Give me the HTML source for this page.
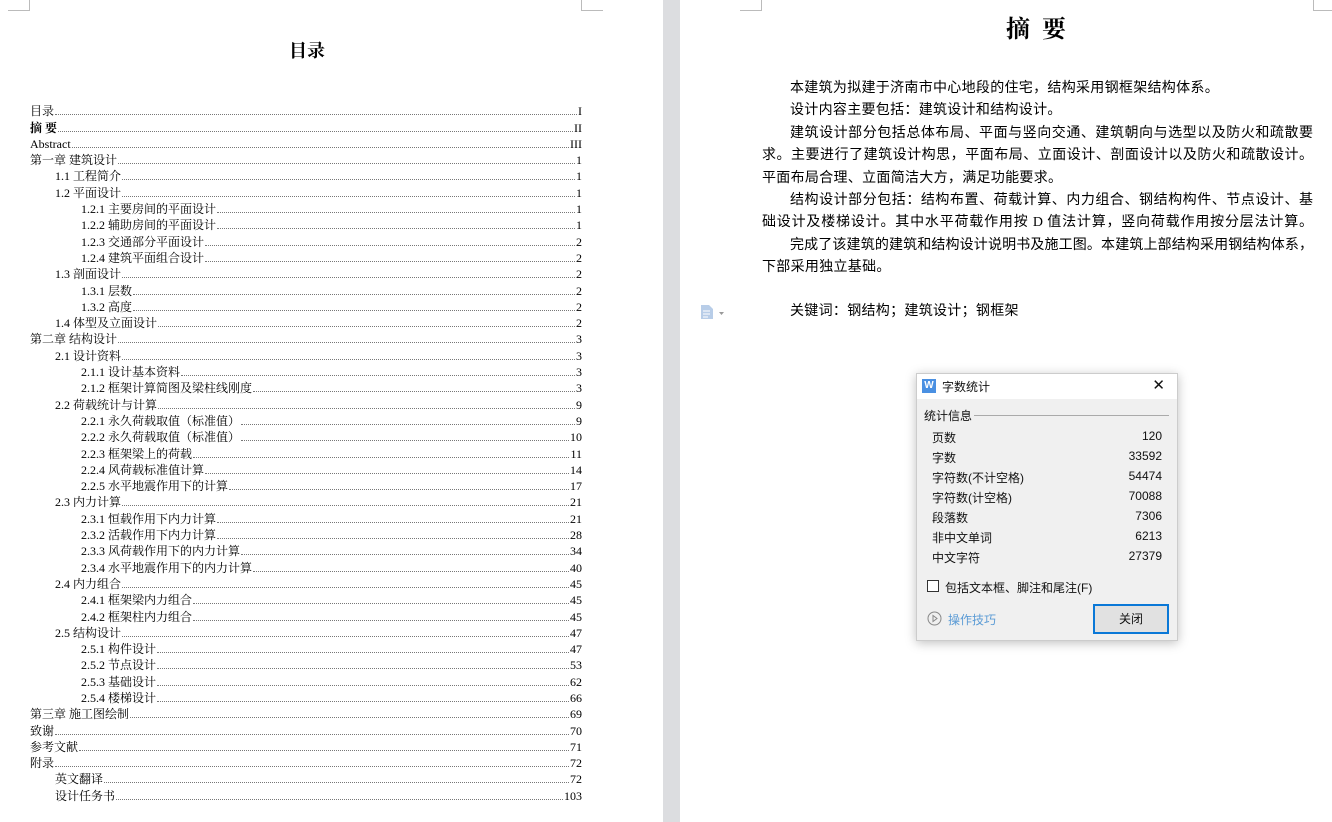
<!DOCTYPE html>
<html><head><meta charset="utf-8"><style>
*{margin:0;padding:0;box-sizing:border-box}
body{width:1332px;height:822px;overflow:hidden;background:#fff;position:relative;font-family:"Liberation Serif","Noto Serif CJK SC","Noto Sans CJK SC",serif;color:#000}
.gap{position:absolute;left:663px;top:0;width:17px;height:822px;background:#dcdde0}
.cm{position:absolute;border-color:#bbb;border-style:solid;border-width:0}
.toc{position:absolute;left:30px;width:552px;top:102px}
.r{display:flex;align-items:flex-end;height:16.3px;font-size:12px;line-height:14px;white-space:nowrap}
.r .f{flex:1;border-bottom:1px dotted #777;margin:0 1px 3px 1px;height:1px}
.l2{padding-left:25px}.l3{padding-left:51px}
.p{position:absolute;left:762px;width:551px;font-size:14px;line-height:22.4px;letter-spacing:0.3px;font-family:"Liberation Serif","Noto Sans CJK SC",sans-serif}
.p div{white-space:nowrap}
.j{text-align:justify;text-align-last:justify;letter-spacing:0}
.dlg{position:absolute;left:916px;top:373px;width:262px;height:268px;background:#f0f0f0;border:1px solid #ccc;box-shadow:0 2px 10px rgba(0,0,0,.25);font-family:"Liberation Sans","Noto Sans CJK SC",sans-serif;font-size:12px;color:#111}
.tb{height:25px;background:#fff;position:relative}
.row{position:absolute;left:15px;width:230px;display:flex;justify-content:space-between}
</style></head><body>
<div class="gap"></div>
<div class="cm" style="left:8px;top:0;width:22px;height:11px;border-right-width:1px;border-bottom-width:1px"></div>
<div class="cm" style="left:581px;top:0;width:22px;height:11px;border-left-width:1px;border-bottom-width:1px"></div>
<div class="cm" style="left:740px;top:0;width:22px;height:11px;border-right-width:1px;border-bottom-width:1px"></div>
<div class="cm" style="left:1313px;top:0;width:22px;height:11px;border-left-width:1px;border-bottom-width:1px"></div>

<div style="position:absolute;left:0;width:614px;top:37px;text-align:center;font-size:18px;font-weight:bold">目录</div>
<div class="toc">
<div class="r"><span>目录</span><span class="f"></span><span>I</span></div>
<div class="r"><b>摘 要</b><span class="f"></span><span>II</span></div>
<div class="r"><span>Abstract</span><span class="f"></span><span>III</span></div>
<div class="r"><span>第一章 建筑设计</span><span class="f"></span><span>1</span></div>
<div class="r l2"><span>1.1 工程简介</span><span class="f"></span><span>1</span></div>
<div class="r l2"><span>1.2 平面设计</span><span class="f"></span><span>1</span></div>
<div class="r l3"><span>1.2.1 主要房间的平面设计</span><span class="f"></span><span>1</span></div>
<div class="r l3"><span>1.2.2 辅助房间的平面设计</span><span class="f"></span><span>1</span></div>
<div class="r l3"><span>1.2.3 交通部分平面设计</span><span class="f"></span><span>2</span></div>
<div class="r l3"><span>1.2.4 建筑平面组合设计</span><span class="f"></span><span>2</span></div>
<div class="r l2"><span>1.3 剖面设计</span><span class="f"></span><span>2</span></div>
<div class="r l3"><span>1.3.1 层数</span><span class="f"></span><span>2</span></div>
<div class="r l3"><span>1.3.2 高度</span><span class="f"></span><span>2</span></div>
<div class="r l2"><span>1.4 体型及立面设计</span><span class="f"></span><span>2</span></div>
<div class="r"><span>第二章 结构设计</span><span class="f"></span><span>3</span></div>
<div class="r l2"><span>2.1 设计资料</span><span class="f"></span><span>3</span></div>
<div class="r l3"><span>2.1.1 设计基本资料</span><span class="f"></span><span>3</span></div>
<div class="r l3"><span>2.1.2 框架计算简图及梁柱线刚度</span><span class="f"></span><span>3</span></div>
<div class="r l2"><span>2.2 荷载统计与计算</span><span class="f"></span><span>9</span></div>
<div class="r l3"><span>2.2.1 永久荷载取值（标准值）</span><span class="f"></span><span>9</span></div>
<div class="r l3"><span>2.2.2 永久荷载取值（标准值）</span><span class="f"></span><span>10</span></div>
<div class="r l3"><span>2.2.3 框架梁上的荷载</span><span class="f"></span><span>11</span></div>
<div class="r l3"><span>2.2.4 风荷载标准值计算</span><span class="f"></span><span>14</span></div>
<div class="r l3"><span>2.2.5 水平地震作用下的计算</span><span class="f"></span><span>17</span></div>
<div class="r l2"><span>2.3 内力计算</span><span class="f"></span><span>21</span></div>
<div class="r l3"><span>2.3.1 恒载作用下内力计算</span><span class="f"></span><span>21</span></div>
<div class="r l3"><span>2.3.2 活载作用下内力计算</span><span class="f"></span><span>28</span></div>
<div class="r l3"><span>2.3.3 风荷载作用下的内力计算</span><span class="f"></span><span>34</span></div>
<div class="r l3"><span>2.3.4 水平地震作用下的内力计算</span><span class="f"></span><span>40</span></div>
<div class="r l2"><span>2.4 内力组合</span><span class="f"></span><span>45</span></div>
<div class="r l3"><span>2.4.1 框架梁内力组合</span><span class="f"></span><span>45</span></div>
<div class="r l3"><span>2.4.2 框架柱内力组合</span><span class="f"></span><span>45</span></div>
<div class="r l2"><span>2.5 结构设计</span><span class="f"></span><span>47</span></div>
<div class="r l3"><span>2.5.1 构件设计</span><span class="f"></span><span>47</span></div>
<div class="r l3"><span>2.5.2 节点设计</span><span class="f"></span><span>53</span></div>
<div class="r l3"><span>2.5.3 基础设计</span><span class="f"></span><span>62</span></div>
<div class="r l3"><span>2.5.4 楼梯设计</span><span class="f"></span><span>66</span></div>
<div class="r"><span>第三章 施工图绘制</span><span class="f"></span><span>69</span></div>
<div class="r"><span>致谢</span><span class="f"></span><span>70</span></div>
<div class="r"><span>参考文献</span><span class="f"></span><span>71</span></div>
<div class="r"><span>附录</span><span class="f"></span><span>72</span></div>
<div class="r l2"><span>英文翻译</span><span class="f"></span><span>72</span></div>
<div class="r l2"><span>设计任务书</span><span class="f"></span><span>103</span></div>
</div>

<div style="position:absolute;left:710px;width:652px;top:9px;text-align:center;font-size:24px;font-weight:bold;letter-spacing:12px;padding-left:12px">摘要</div>
<div class="p" style="top:78px">
<div style="padding-left:28px">本建筑为拟建于济南市中心地段的住宅，结构采用钢框架结构体系。</div>
<div style="padding-left:28px">设计内容主要包括：建筑设计和结构设计。</div>
<div class="j" style="padding-left:28px">建筑设计部分包括总体布局、平面与竖向交通、建筑朝向与选型以及防火和疏散要</div>
<div class="j">求。主要进行了建筑设计构思，平面布局、立面设计、剖面设计以及防火和疏散设计。</div>
<div>平面布局合理、立面简洁大方，满足功能要求。</div>
<div class="j" style="padding-left:28px">结构设计部分包括：结构布置、荷载计算、内力组合、钢结构构件、节点设计、基</div>
<div class="j">础设计及楼梯设计。其中水平荷载作用按 D 值法计算，竖向荷载作用按分层法计算。</div>
<div class="j" style="padding-left:28px">完成了该建筑的建筑和结构设计说明书及施工图。本建筑上部结构采用钢结构体系，</div>
<div>下部采用独立基础。</div>
<div style="height:21px"></div>
<div style="padding-left:28px">关键词：钢结构；建筑设计；钢框架</div>
</div>
<svg style="position:absolute;left:700px;top:304px" width="28" height="16"><path d="M1 1h8l4 4v10H1z" fill="#b8cde8"/><path d="M3 7h7M3 10h7M3 13h5" stroke="#fff"/><path d="M19 8h5l-2.5 3z" fill="#999"/></svg>

<div class="dlg">
<div class="tb">
<div style="position:absolute;left:5px;top:5px;width:14px;height:14px;background:#4a90e2;color:#fff;font-size:10px;line-height:14px;text-align:center;font-weight:bold">W</div>
<div style="position:absolute;left:25px;top:4px">字数统计</div>
<div style="position:absolute;right:12px;top:2px;font-size:15px;font-weight:300">✕</div>
</div>
<div style="position:absolute;left:7px;top:33px">统计信息</div>
<div style="position:absolute;left:57px;right:8px;top:41px;border-top:1px solid #aaa"></div>
<div class="row" style="top:55px"><span>页数</span><span>120</span></div>
<div class="row" style="top:75px"><span>字数</span><span>33592</span></div>
<div class="row" style="top:95px"><span>字符数(不计空格)</span><span>54474</span></div>
<div class="row" style="top:115px"><span>字符数(计空格)</span><span>70088</span></div>
<div class="row" style="top:135px"><span>段落数</span><span>7306</span></div>
<div class="row" style="top:155px"><span>非中文单词</span><span>6213</span></div>
<div class="row" style="top:175px"><span>中文字符</span><span>27379</span></div>
<div style="position:absolute;left:10px;top:206px;width:12px;height:12px;border:1px solid #333;background:#fff"></div>
<div style="position:absolute;left:28px;top:205px">包括文本框、脚注和尾注(F)</div>
<svg style="position:absolute;left:10px;top:237px" width="16" height="16"><circle cx="7.5" cy="7.5" r="6.5" fill="none" stroke="#888"/><path d="M6 4.5v6l4-3z" fill="none" stroke="#888"/></svg>
<div style="position:absolute;left:31px;top:237px;color:#5b9bd5">操作技巧</div>
<div style="position:absolute;left:176px;top:230px;width:76px;height:30px;border:2px solid #0a78d7;background:#e1e1e1;text-align:center;line-height:26px">关闭</div>
</div>
</body></html>
